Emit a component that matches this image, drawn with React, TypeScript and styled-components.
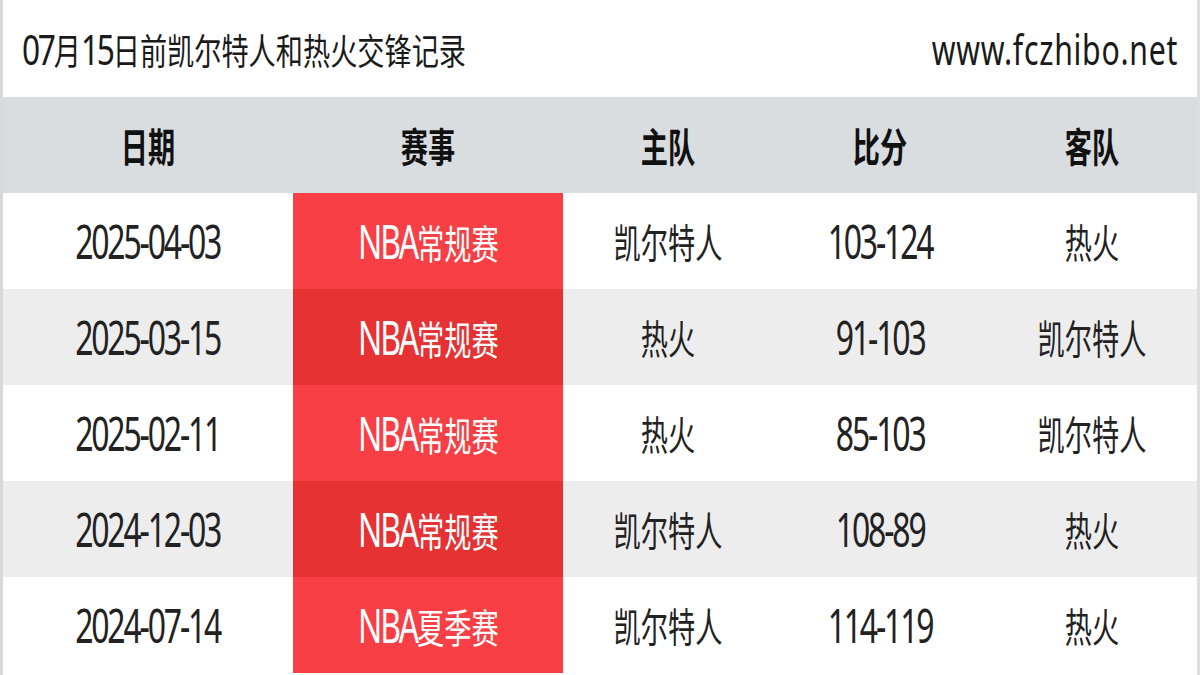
import React from "react";
import styled, { createGlobalStyle } from "styled-components";

type Match = {
  date: string;
  event: string;
  home: string;
  score: string;
  away: string;
};

const matches: Match[] = [
  { date: "2025-04-03", event: "NBA常规赛", home: "凯尔特人", score: "103-124", away: "热火" },
  { date: "2025-03-15", event: "NBA常规赛", home: "热火", score: "91-103", away: "凯尔特人" },
  { date: "2025-02-11", event: "NBA常规赛", home: "热火", score: "85-103", away: "凯尔特人" },
  { date: "2024-12-03", event: "NBA常规赛", home: "凯尔特人", score: "108-89", away: "热火" },
  { date: "2024-07-14", event: "NBA夏季赛", home: "凯尔特人", score: "114-119", away: "热火" },
];

const GlobalStyle = createGlobalStyle`
  html, body {
    margin: 0;
    padding: 0;
    background: #ffffff;
  }
`;

// text in the shot is squeezed sideways, latin runs need their own size
function Squeezed({ text, size }: { text: string; size: "title" | "cell" }) {
  const parts = text.split(/([\x00-\x7f]+)/).filter((p) => p.length > 0);
  return (
    <Squeeze $size={size}>
      {parts.map((p, i) =>
        /^[\x00-\x7f]+$/.test(p) ? (
          <Latin key={i} $size={size}>
            {p}
          </Latin>
        ) : (
          <span key={i}>{p}</span>
        )
      )}
    </Squeeze>
  );
}

export default function App() {
  return (
    <>
      <GlobalStyle />
      <Page>
        <TopBar>
          <Squeezed text="07月15日前凯尔特人和热火交锋记录" size="title" />
          <SiteName>www.fczhibo.net</SiteName>
        </TopBar>
        <Table>
          <HeadCell>
            <Squeezed text="日期" size="cell" />
          </HeadCell>
          <HeadCell>
            <Squeezed text="赛事" size="cell" />
          </HeadCell>
          <HeadCell>
            <Squeezed text="主队" size="cell" />
          </HeadCell>
          <HeadCell>
            <Squeezed text="比分" size="cell" />
          </HeadCell>
          <HeadCell>
            <Squeezed text="客队" size="cell" />
          </HeadCell>
          {matches.map((m, index) => {
            const striped = index % 2 === 1;
            return (
              <React.Fragment key={index}>
                <Cell $striped={striped}>
                  <Squeezed text={m.date} size="cell" />
                </Cell>
                <EventCell $striped={striped}>
                  <Squeezed text={m.event} size="cell" />
                </EventCell>
                <Cell $striped={striped}>
                  <Squeezed text={m.home} size="cell" />
                </Cell>
                <Cell $striped={striped}>
                  <Squeezed text={m.score} size="cell" />
                </Cell>
                <Cell $striped={striped}>
                  <Squeezed text={m.away} size="cell" />
                </Cell>
              </React.Fragment>
            );
          })}
        </Table>
      </Page>
    </>
  );
}

const Page = styled.div`
  width: 1200px;
  height: 675px;
  box-sizing: border-box;
  border-left: 3px solid #d9d9d9;
  border-right: 3px solid #dedede;
  overflow: hidden;
  display: flex;
  flex-direction: column;
  background: #ffffff;
`;

const TopBar = styled.div`
  height: 97px;
  flex-shrink: 0;
  display: flex;
  align-items: center;
  justify-content: space-between;
  padding: 0 19px 0 19px;
  color: #1a1a1a;
`;

const Squeeze = styled.span<{ $size: "title" | "cell" }>`
  display: inline-block;
  white-space: nowrap;
  font-family: "Noto Sans CJK SC", sans-serif;
  font-size: ${(p) => (p.$size === "title" ? "36px" : "40px")};
  line-height: 1;
  transform: scaleX(${(p) => (p.$size === "title" ? 0.755 : 0.68)});
  transform-origin: ${(p) => (p.$size === "title" ? "left center" : "center center")};
`;

const Latin = styled.span<{ $size: "title" | "cell" }>`
  font-family: "Noto Sans", "Noto Sans CJK SC", sans-serif;
  font-size: ${(p) => (p.$size === "title" ? "42px" : "47px")};
  letter-spacing: ${(p) => (p.$size === "title" ? "-3px" : "-3.2px")};
`;

const SiteName = styled.span`
  display: inline-block;
  font-family: "Noto Sans", sans-serif;
  font-size: 42px;
  line-height: 1;
  letter-spacing: 1px;
  transform: scaleX(0.72);
  transform-origin: right center;
  white-space: nowrap;
`;

const Table = styled.div`
  display: grid;
  grid-template-columns: 290px 270px 210px 214px 1fr;
  grid-auto-rows: 96px;
`;

const HeadCell = styled.div`
  display: flex;
  align-items: center;
  justify-content: center;
  background: #d9dde0;
  color: #111111;
  font-weight: 700;
`;

const Cell = styled.div<{ $striped: boolean }>`
  display: flex;
  align-items: center;
  justify-content: center;
  background: ${(p) => (p.$striped ? "#eeedee" : "#ffffff")};
  color: #222222;
`;

const EventCell = styled(Cell)`
  background: ${(p) => (p.$striped ? "#e73234" : "#f83f45")};
  color: #ffffff;
`;
